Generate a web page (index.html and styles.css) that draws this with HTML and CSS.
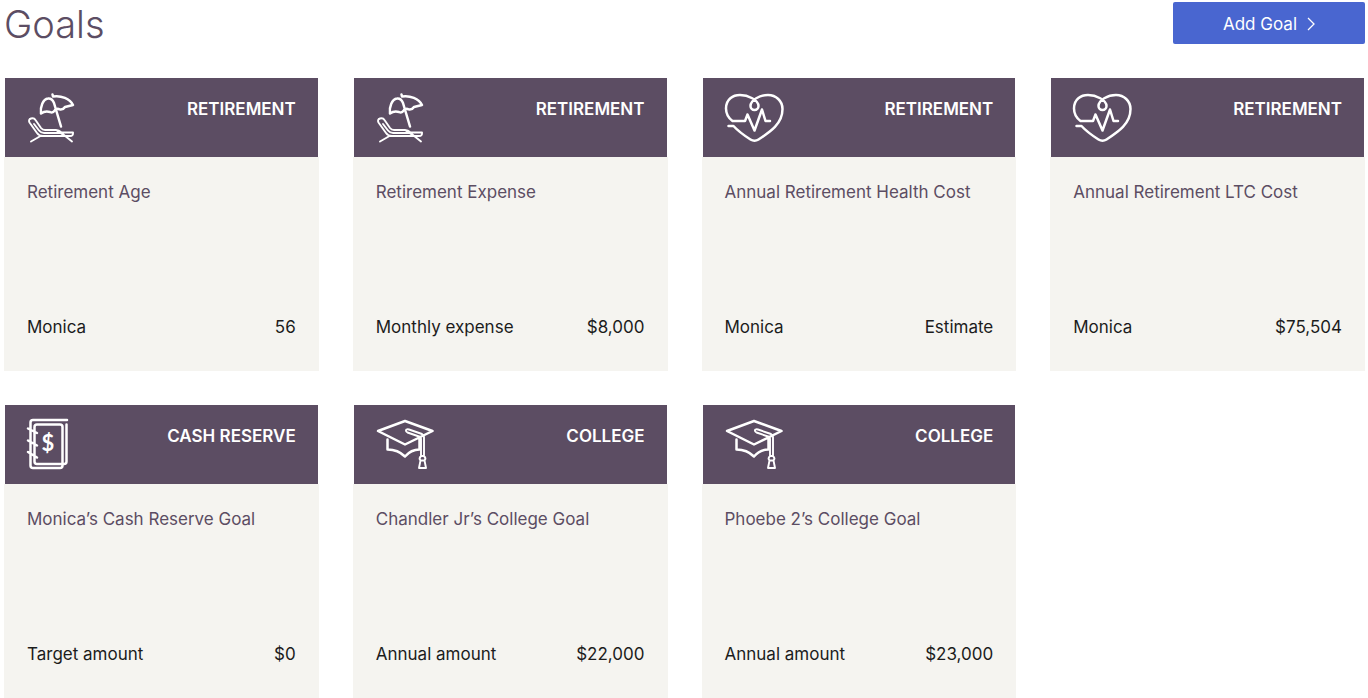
FILE: index.html
```html
<!DOCTYPE html>
<html lang="en">
<head>
<meta charset="utf-8">
<title>Goals</title>
<link rel="stylesheet" href="styles.css">
</head>
<body>
<svg class="icon-defs" aria-hidden="true">
  <symbol id="beach" viewBox="0 0 64 54">
    <path d="M27.500 4.500L28 6.500C36 5 45 9 48 15L40 17Q38 20 35 19.500Q32 18 30 20Q28 23.500 25 22Q20 20.500 16 23.500C15 17 18 9 23 8.500Q27 8 29 13L36 36.500"/>
    <path class="fine" d="M6 28.500Q9 27.500 10.500 30L16 38Q17.500 40 20 40H31Q34 40 36.500 42.500H48Q48.500 46 45 46H18Q14 46 12 43L4.500 32.500Q3 29.500 6 28.500M9 34L14 40.500Q16 43 19 43H36.500L47 51.500M15.500 46L6 51.500M31 40L40 46"/>
  </symbol>
  <symbol id="heart" viewBox="0 0 64 54">
    <path d="M47 31H42.500L39 19.500L31.500 40.500L24.500 24.500L22 31H9.500C5.500 28 3 23 3 18.500C3 9 10 5 17 5C25 5 35.500 10 35.500 16A4 4 0 1 1 27.500 16C27.500 10 37 5 45 5C53 5 59.500 11 59.500 19C59.500 34 47 42 35.500 49.500Q31.500 52 27.500 49.500C22 46 16 42 10.500 36H5.500"/>
  </symbol>
  <symbol id="book" viewBox="0 0 64 54">
    <path d="M42 3H8Q5.500 3 5.500 5.500V48.500Q5.500 51 8 51H35Q37.500 51 37.500 48.500V10Q37.500 7.500 35 7.500H12Q9.500 7.500 9.500 10V44.500Q9.500 47 12 47H39Q41.500 47 41.500 44.500V7.500M3 11.500L12 16M3 23.500L12 28.500M3 35L12 40.500"/>
    <text class="icon-text" x="23" y="34" text-anchor="middle">$</text>
  </symbol>
  <symbol id="cap" viewBox="0 0 64 54">
    <path d="M4 14L31 4L58.500 14L31 27.500ZM13.500 22.500V32.500Q24 32.500 31 39.500Q37 32.500 45.500 32.500V20"/>
    <path class="fine" d="M47 39V22Q47 20 45 19.500L33.500 15.500Q31 14 32.500 12.500Q33.500 12 35 12.500L48 17Q50 18 50 20V39M47 39Q44.500 41.500 46.500 43.500L45 51H52L50.500 43.500Q52.500 41.500 50 39ZM46.500 43.500H50.500"/>
  </symbol>
</svg>
<header class="page-head">
  <h1 class="page-title">Goals</h1>
  <button class="add-goal" type="button">Add Goal
    <svg class="chevron" viewBox="0 0 8 14" aria-hidden="true"><path d="M1 1L7 7L1 13"/></svg>
  </button>
</header>
<main class="goals">
  <article class="card">
    <div class="card-head"><svg class="icon" aria-hidden="true"><use href="#beach"/></svg><span class="kind">RETIREMENT</span></div>
    <div class="card-body"><h2 class="name">Retirement Age</h2><div class="detail"><span>Monica</span><span>56</span></div></div>
  </article>
  <article class="card">
    <div class="card-head"><svg class="icon" aria-hidden="true"><use href="#beach"/></svg><span class="kind">RETIREMENT</span></div>
    <div class="card-body"><h2 class="name">Retirement Expense</h2><div class="detail"><span>Monthly expense</span><span>$8,000</span></div></div>
  </article>
  <article class="card">
    <div class="card-head"><svg class="icon" aria-hidden="true"><use href="#heart"/></svg><span class="kind">RETIREMENT</span></div>
    <div class="card-body"><h2 class="name">Annual Retirement Health Cost</h2><div class="detail"><span>Monica</span><span>Estimate</span></div></div>
  </article>
  <article class="card">
    <div class="card-head"><svg class="icon" aria-hidden="true"><use href="#heart"/></svg><span class="kind">RETIREMENT</span></div>
    <div class="card-body"><h2 class="name">Annual Retirement LTC Cost</h2><div class="detail"><span>Monica</span><span>$75,504</span></div></div>
  </article>
  <article class="card">
    <div class="card-head"><svg class="icon" aria-hidden="true"><use href="#book"/></svg><span class="kind">CASH RESERVE</span></div>
    <div class="card-body"><h2 class="name">Monica’s Cash Reserve Goal</h2><div class="detail"><span>Target amount</span><span>$0</span></div></div>
  </article>
  <article class="card">
    <div class="card-head"><svg class="icon" aria-hidden="true"><use href="#cap"/></svg><span class="kind">COLLEGE</span></div>
    <div class="card-body"><h2 class="name">Chandler Jr’s College Goal</h2><div class="detail"><span>Annual amount</span><span>$22,000</span></div></div>
  </article>
  <article class="card">
    <div class="card-head"><svg class="icon" aria-hidden="true"><use href="#cap"/></svg><span class="kind">COLLEGE</span></div>
    <div class="card-body"><h2 class="name">Phoebe 2’s College Goal</h2><div class="detail"><span>Annual amount</span><span>$23,000</span></div></div>
  </article>
</main>
</body>
</html>
```
FILE: styles.css
```css
* { box-sizing: border-box; }
body {
  margin: 0;
  padding: 2px 3px 0 4px;
  background: #fff;
  color: #1c1c1c;
  font: 400 17px/24px Inter, "Liberation Sans", sans-serif;
}
.icon-defs { display: none; }
.page-head {
  display: flex;
  justify-content: space-between;
  align-items: flex-start;
  margin-bottom: 32px;
}
.page-title {
  margin: 0;
  color: #5c4d63;
  font-size: 38px;
  font-weight: 350;
  line-height: 44px;
}
.add-goal {
  display: flex;
  align-items: center;
  justify-content: center;
  gap: 10px;
  width: 192px;
  height: 42px;
  padding: 1px 0 0;
  border: 0;
  border-radius: 2px;
  background: #4966d0;
  color: #fff;
  font: inherit;
}
.chevron {
  width: 8px;
  height: 14px;
  fill: none;
  stroke: #fff;
  stroke-width: 1.3;
}
.goals {
  display: grid;
  grid-template-columns: repeat(auto-fill, minmax(300px, 1fr));
  gap: 34px;
}
.card-head {
  display: flex;
  justify-content: space-between;
  height: 79px;
  margin: 0 1px;
  padding: 12px 22px 0 20px;
  background: #5c4d63;
  color: #fff;
}
.icon {
  width: 64px;
  height: 54px;
  fill: none;
  stroke: #fff;
  stroke-width: 2.5;
  stroke-linecap: round;
  stroke-linejoin: round;
}
.fine { stroke-width: 1.9; }
.icon-text {
  fill: #fff;
  stroke: none;
  font: 700 22px Lato, sans-serif;
}
.kind {
  padding-top: 7px;
  font-weight: 600;
}
.card-body {
  display: flex;
  flex-direction: column;
  justify-content: space-between;
  min-height: 214px;
  padding: 23px 23px 32px;
  background: #f5f4f0;
}
.name {
  margin: 0;
  color: #5c4d63;
  font-size: 17px;
  font-weight: 400;
}
.detail {
  display: flex;
  justify-content: space-between;
}
```
